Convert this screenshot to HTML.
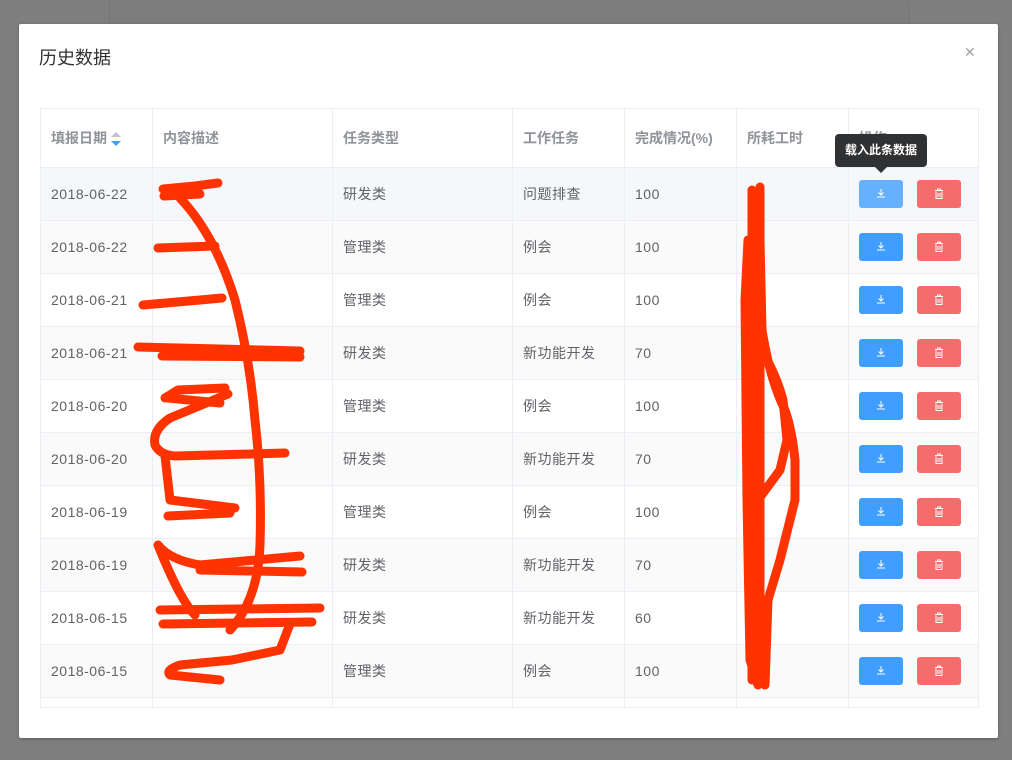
<!DOCTYPE html>
<html><head><meta charset="utf-8"><style>
*{box-sizing:border-box;margin:0;padding:0}
body{width:1012px;height:760px;background:#7f7f7f;position:relative;overflow:hidden;font-family:"Liberation Sans","Noto Sans CJK SC",sans-serif}
.bg{position:absolute;left:110px;top:0;width:798px;height:44px;background:#7d7d7d;box-shadow:0 0 2px rgba(0,0,0,.2)}
.modal{position:absolute;left:19px;top:24px;width:979px;height:714px;background:#fff;border-radius:2px;box-shadow:0 1px 3px rgba(0,0,0,.3)}
.title{position:absolute;left:20px;top:20px;font-size:18px;color:#303133}
.close{position:absolute;left:945px;top:20px;font-size:14px;color:#a0a3a8}
.wrap{position:absolute;left:21px;top:84px;width:939px;height:600px;overflow:hidden;border-bottom:1px solid #ebeef5}
table{border-collapse:collapse;table-layout:fixed}
td,th{border:1px solid #ebeef5;font-size:14px;letter-spacing:.5px;color:#606266;text-align:left;padding-left:10px;height:53px;font-weight:normal}
th{height:59px;color:#909399;font-weight:bold;letter-spacing:0}
tr.s td{background:#fafafa}
tr.h td{background:#f5f7fa}
.b{display:inline-block;width:44px;height:28px;border-radius:3px;vertical-align:middle;position:relative}
.bl{background:#409eff}.bh{background:#66b1ff}.rd{background:#f56c6c;margin-left:14px}
.b svg{position:absolute;left:17px;top:8px}
.tip{position:absolute;left:835px;top:134px;width:92px;height:33px;background:#303133;border-radius:4px;color:#fff;font-size:12px;font-weight:bold;text-align:center;line-height:33px}
.tip:after{content:"";position:absolute;left:40px;bottom:-6px;border:6px solid transparent;border-bottom:none;border-top-color:#303133}
.sort{display:inline-block;vertical-align:middle;margin-left:4px;width:10px;height:14px;position:relative}
.sort:before{content:"";position:absolute;top:0;left:0;border:5px solid transparent;border-bottom-color:#c0c4cc;border-top:none}
.sort:after{content:"";position:absolute;bottom:0;left:0;border:5px solid transparent;border-top-color:#409eff;border-bottom:none}
</style></head><body>
<div class="bg"></div>
<div class="modal">
<div class="title">历史数据</div>
<div class="close">✕</div>
<div class="wrap">
<table>
<colgroup><col width="112"><col width="180"><col width="180"><col width="112"><col width="112"><col width="112"><col width="130"></colgroup>
<tr><th>填报日期<span class="sort"></span></th><th>内容描述</th><th>任务类型</th><th>工作任务</th><th>完成情况(%)</th><th>所耗工时</th><th>操作</th></tr>
<tr class="h"><td>2018-06-22</td><td></td><td>研发类</td><td>问题排查</td><td>100</td><td></td><td><span class="b bh"><svg width="10" height="10"><path d="M5 1v6M2.5 4.5L5 7l2.5-2.5M1 9h8" stroke="#fff" fill="none"/></svg></span><span class="b rd"><svg width="10" height="12"><path d="M1 2.5h8M3.5 2.5V1h3v1.5M2 3.5v7h6v-7M4 5v4M6 5v4" stroke="#fff" fill="none"/></svg></span></td></tr>
<tr class="s"><td>2018-06-22</td><td></td><td>管理类</td><td>例会</td><td>100</td><td></td><td><span class="b bl"><svg width="10" height="10"><path d="M5 1v6M2.5 4.5L5 7l2.5-2.5M1 9h8" stroke="#fff" fill="none"/></svg></span><span class="b rd"><svg width="10" height="12"><path d="M1 2.5h8M3.5 2.5V1h3v1.5M2 3.5v7h6v-7M4 5v4M6 5v4" stroke="#fff" fill="none"/></svg></span></td></tr>
<tr><td>2018-06-21</td><td></td><td>管理类</td><td>例会</td><td>100</td><td></td><td><span class="b bl"><svg width="10" height="10"><path d="M5 1v6M2.5 4.5L5 7l2.5-2.5M1 9h8" stroke="#fff" fill="none"/></svg></span><span class="b rd"><svg width="10" height="12"><path d="M1 2.5h8M3.5 2.5V1h3v1.5M2 3.5v7h6v-7M4 5v4M6 5v4" stroke="#fff" fill="none"/></svg></span></td></tr>
<tr class="s"><td>2018-06-21</td><td></td><td>研发类</td><td>新功能开发</td><td>70</td><td></td><td><span class="b bl"><svg width="10" height="10"><path d="M5 1v6M2.5 4.5L5 7l2.5-2.5M1 9h8" stroke="#fff" fill="none"/></svg></span><span class="b rd"><svg width="10" height="12"><path d="M1 2.5h8M3.5 2.5V1h3v1.5M2 3.5v7h6v-7M4 5v4M6 5v4" stroke="#fff" fill="none"/></svg></span></td></tr>
<tr><td>2018-06-20</td><td></td><td>管理类</td><td>例会</td><td>100</td><td></td><td><span class="b bl"><svg width="10" height="10"><path d="M5 1v6M2.5 4.5L5 7l2.5-2.5M1 9h8" stroke="#fff" fill="none"/></svg></span><span class="b rd"><svg width="10" height="12"><path d="M1 2.5h8M3.5 2.5V1h3v1.5M2 3.5v7h6v-7M4 5v4M6 5v4" stroke="#fff" fill="none"/></svg></span></td></tr>
<tr class="s"><td>2018-06-20</td><td></td><td>研发类</td><td>新功能开发</td><td>70</td><td></td><td><span class="b bl"><svg width="10" height="10"><path d="M5 1v6M2.5 4.5L5 7l2.5-2.5M1 9h8" stroke="#fff" fill="none"/></svg></span><span class="b rd"><svg width="10" height="12"><path d="M1 2.5h8M3.5 2.5V1h3v1.5M2 3.5v7h6v-7M4 5v4M6 5v4" stroke="#fff" fill="none"/></svg></span></td></tr>
<tr><td>2018-06-19</td><td></td><td>管理类</td><td>例会</td><td>100</td><td></td><td><span class="b bl"><svg width="10" height="10"><path d="M5 1v6M2.5 4.5L5 7l2.5-2.5M1 9h8" stroke="#fff" fill="none"/></svg></span><span class="b rd"><svg width="10" height="12"><path d="M1 2.5h8M3.5 2.5V1h3v1.5M2 3.5v7h6v-7M4 5v4M6 5v4" stroke="#fff" fill="none"/></svg></span></td></tr>
<tr class="s"><td>2018-06-19</td><td></td><td>研发类</td><td>新功能开发</td><td>70</td><td></td><td><span class="b bl"><svg width="10" height="10"><path d="M5 1v6M2.5 4.5L5 7l2.5-2.5M1 9h8" stroke="#fff" fill="none"/></svg></span><span class="b rd"><svg width="10" height="12"><path d="M1 2.5h8M3.5 2.5V1h3v1.5M2 3.5v7h6v-7M4 5v4M6 5v4" stroke="#fff" fill="none"/></svg></span></td></tr>
<tr><td>2018-06-15</td><td></td><td>研发类</td><td>新功能开发</td><td>60</td><td></td><td><span class="b bl"><svg width="10" height="10"><path d="M5 1v6M2.5 4.5L5 7l2.5-2.5M1 9h8" stroke="#fff" fill="none"/></svg></span><span class="b rd"><svg width="10" height="12"><path d="M1 2.5h8M3.5 2.5V1h3v1.5M2 3.5v7h6v-7M4 5v4M6 5v4" stroke="#fff" fill="none"/></svg></span></td></tr>
<tr class="s"><td>2018-06-15</td><td></td><td>管理类</td><td>例会</td><td>100</td><td></td><td><span class="b bl"><svg width="10" height="10"><path d="M5 1v6M2.5 4.5L5 7l2.5-2.5M1 9h8" stroke="#fff" fill="none"/></svg></span><span class="b rd"><svg width="10" height="12"><path d="M1 2.5h8M3.5 2.5V1h3v1.5M2 3.5v7h6v-7M4 5v4M6 5v4" stroke="#fff" fill="none"/></svg></span></td></tr>
<tr><td></td><td></td><td></td><td></td><td></td><td></td><td></td></tr>
</table>
</div>
</div>
<div class="tip">载入此条数据</div>
<svg width="1012" height="760" style="position:absolute;left:0;top:0" fill="none" stroke="#ff3300" stroke-width="9" stroke-linecap="round" stroke-linejoin="round">
<path d="M163 189L195 186L218 183M164 196L200 194"/>
<path d="M180 198Q215 235 235 300Q250 360 255 420Q262 480 260 545Q258 600 230 630"/>
<path d="M158 248L215 246M143 305L200 300L222 298"/>
<path d="M138 347L300 351M162 356L300 357"/>
<path d="M165 398L178 390L225 388M168 398L220 403M228 394L170 418Q152 430 155 445Q160 455 175 456L285 453M165 456L170 500L235 508M168 516L230 513"/>
<path d="M158 545Q170 560 200 565L300 556M200 570L302 572M158 545Q180 600 195 615"/>
<path d="M160 610L320 608M163 624L312 622M290 624L280 650L232 660L180 665Q165 670 170 675L220 680"/>
<path d="M752 190L752 680M760 187L760 680M748 240L745 300L747 500L750 660L758 685"/>
<path d="M760 240L762 330Q770 380 785 410Q792 430 795 460L795 500L780 560L768 600L765 685"/>
<path d="M758 345Q775 370 783 400L787 440L780 470L758 500"/>
</svg>
</body></html>
